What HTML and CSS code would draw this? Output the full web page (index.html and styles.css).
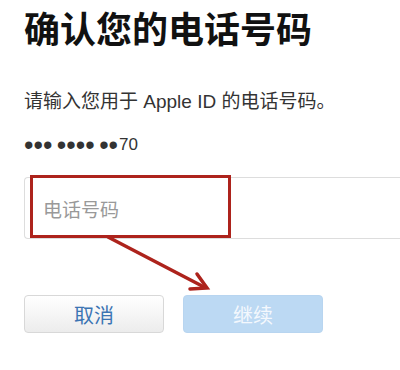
FILE: index.html
```html
<!DOCTYPE html>
<html lang="zh-CN">
<head>
<meta charset="utf-8">
<link rel="stylesheet" href="styles.css">
</head>
<body>
<main class="page">
  <h1 class="title">确认您的电话号码</h1>
  <p class="desc">请输入您用于 Apple ID 的电话号码。</p>
  <p class="masked"><span class="dots">••• •••• ••</span><span class="digits">70</span></p>
  <div class="field">
    <span class="placeholder">电话号码</span>
  </div>
  <div class="actions">
    <button class="btn btn-cancel">取消</button>
    <button class="btn btn-continue">继续</button>
  </div>
</main>
<svg class="annot" width="400" height="370" viewBox="0 0 400 370">
  <rect x="31.5" y="176.5" width="198" height="60" fill="none" stroke="#ad231c" stroke-width="3"/>
  <line x1="108" y1="237" x2="204" y2="287" stroke="#ad231c" stroke-width="3.5" stroke-linecap="round"/>
  <polyline points="197,274 207,288 190,289" fill="none" stroke="#ad231c" stroke-width="3.5" stroke-linejoin="miter" stroke-linecap="round"/>
</svg>
</body>
</html>
```
FILE: styles.css
```css
html, body {
  margin: 0;
  padding: 0;
  background: #ffffff;
  overflow: hidden;
}
body {
  position: relative;
  width: 400px;
  height: 370px;
  font-family: "Liberation Sans", "Noto Sans CJK SC", sans-serif;
}
.page {
  padding: 5px 0 0 24px;
  display: flex;
  flex-direction: column;
}
.title {
  margin: 0;
  font-family: "Noto Sans CJK SC", sans-serif;
  font-size: 36px;
  line-height: 44px;
  font-weight: 700;
  color: #111111;
}
.desc {
  margin: 41px 0 0;
  font-size: 19px;
  line-height: 24px;
  color: #333333;
}
.masked {
  margin: 15px 0 0;
  height: 24px;
  line-height: 24px;
  color: #333333;
  display: flex;
  align-items: baseline;
}
.dots {
  font-family: "Liberation Sans", sans-serif;
  font-size: 27px;
  line-height: 24px;
  word-spacing: -3px;
  position: relative;
  top: 4px;
}
.digits {
  font-family: "Liberation Sans", sans-serif;
  font-size: 17px;
  margin-left: 1px;
}
.field {
  margin-top: 24px;
  height: 60px;
  border: 1px solid #dddddd;
  border-right: none;
  border-radius: 4px 0 0 4px;
  display: flex;
  align-items: center;
  padding-left: 18px;
}
.placeholder {
  font-family: "Noto Sans CJK SC", sans-serif;
  font-size: 19px;
  color: #999999;
}
.actions {
  margin-top: 56px;
  display: flex;
  gap: 19px;
}
.btn {
  width: 140px;
  height: 38px;
  border-radius: 4px;
  font-family: "Noto Sans CJK SC", sans-serif;
  font-size: 20px;
  padding: 0;
  display: flex;
  align-items: center;
  justify-content: center;
}
.btn-cancel {
  border: 1px solid #d8d8d8;
  background: linear-gradient(#ffffff, #ececec);
  color: #3b74b3;
}
.btn-continue {
  border: 1px solid #b8d5f0;
  background: #bcd9f3;
  color: #f4f8fd;
}
.annot {
  position: absolute;
  left: 0;
  top: 0;
  pointer-events: none;
}
```
